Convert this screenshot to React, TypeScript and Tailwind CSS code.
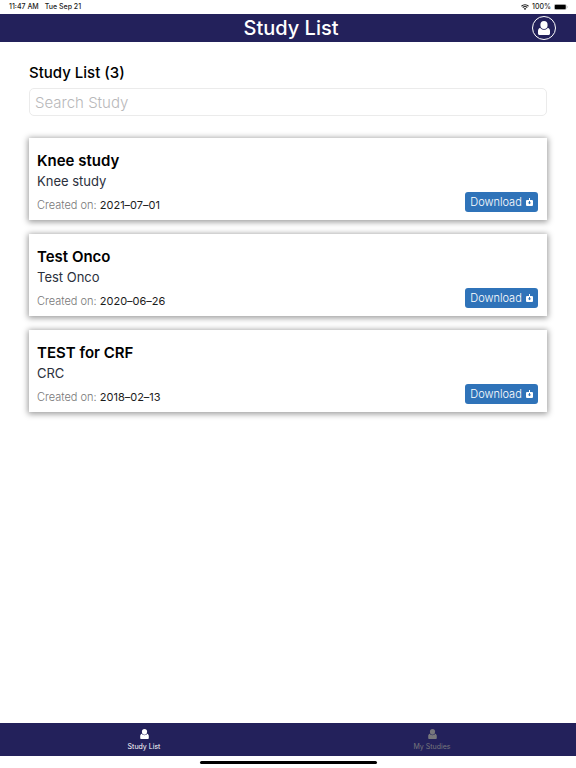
import { useState } from "react";

type Study = {
  id: number;
  name: string;
  description: string;
  createdOn: string;
};

const studies: Study[] = [
  {
    id: 1,
    name: "Knee study",
    description: "Knee study",
    createdOn: "2021–07–01",
  },
  {
    id: 2,
    name: "Test Onco",
    description: "Test Onco",
    createdOn: "2020–06–26",
  },
  {
    id: 3,
    name: "TEST for CRF",
    description: "CRC",
    createdOn: "2018–02–13",
  },
];

function PersonIcon({ className }: { className: string }) {
  return (
    <svg viewBox="0 0 24 28" fill="currentColor" aria-hidden className={className}>
      <ellipse cx="12" cy="8" rx="7.2" ry="8" />
      <path d="M4.500 13.500C1.500 14.500 0 17 0 20v5c0 1.700 1.300 3 3 3h18c1.700 0 3-1.300 3-3v-5c0-3-1.500-5.500-4.500-6.500-1.700 2.700-4.300 4-7.500 4s-5.800-1.300-7.500-4z" />
    </svg>
  );
}

function DownloadIcon() {
  return (
    <svg viewBox="0 0 14 16" aria-hidden className="h-2 w-[7px]">
      <path d="M6 0h2v4h4a2 2 0 0 1 2 2v8a2 2 0 0 1-2 2H2a2 2 0 0 1-2-2V6a2 2 0 0 1 2-2h4z" fill="white" />
      <path d="M6 6h2v3h2.500L7 12.500 3.500 9H6z" fill="#2f73b9" />
    </svg>
  );
}

function StatusBar() {
  return (
    <div className="flex h-3.5 items-center justify-between pr-2 pl-[9px] text-[7px] font-medium text-[#1c1c1c]">
      <div className="flex gap-1.5">
        <span>11:47 AM</span>
        <span>Tue Sep 21</span>
      </div>
      <div className="flex items-center gap-[3px]">
        <svg viewBox="0 0 16 12" aria-hidden className="h-1.5 w-2">
          <path d="M1 4.500a10 10 0 0 1 14 0M3.500 7.300a6.400 6.400 0 0 1 9 0" fill="none" stroke="currentColor" strokeWidth="2.200" />
          <path d="M5.500 9.300a3.600 3.600 0 0 1 5 0L8 12z" fill="currentColor" />
        </svg>
        <span>100%</span>
        <svg viewBox="0 0 28 12" aria-hidden className="h-1.5 w-3.5">
          <rect x="0.500" y="0.500" width="24" height="11" rx="3" fill="none" stroke="#999" />
          <rect x="1.500" y="1.500" width="22" height="9" rx="2" fill="black" />
          <path d="M26 4c1.500.5 1.500 3.500 0 4z" fill="#999" />
        </svg>
      </div>
    </div>
  );
}

function StudyCard({ study }: { study: Study }) {
  return (
    <li className="flex items-end justify-between bg-white px-2 pt-[13px] pb-[7px] shadow-[0_1px_6px_1px_rgba(0,0,0,0.4)]">
      <div>
        <h3 className="text-[15px] leading-5 font-semibold text-black">
          {study.name}
        </h3>
        <p className="text-[13px] leading-5 text-[#2b303c]">
          {study.description}
        </p>
        <p className="mt-1.5 text-[11px] leading-4 text-[#1c1c1c]">
          <span className="font-light text-[#777]">Created on:</span>{" "}
          {study.createdOn}
        </p>
      </div>

      <button
        type="button"
        className="mr-px mb-px flex h-5 w-[73px] items-center justify-center gap-1 rounded-[3px] bg-[#2f73b9] text-[11px] font-light text-white"
      >
        Download
        <DownloadIcon />
      </button>
    </li>
  );
}

export default function App() {
  const [search, setSearch] = useState("");

  const filtered = studies.filter((study) =>
    study.name.toLowerCase().includes(search.toLowerCase()),
  );

  return (
    <div className="flex min-h-screen flex-col bg-white font-['Inter','Liberation_Sans',sans-serif]">
      <StatusBar />

      <header className="grid h-7 grid-cols-[1fr_auto_1fr] items-center bg-[#23215b] pr-5 pl-[26px] text-white">
        <h1 className="col-start-2 text-[20px] leading-7 font-medium">
          Study List
        </h1>
        <button
          type="button"
          aria-label="Profile"
          className="flex size-6 items-center justify-center justify-self-end rounded-full border border-white"
        >
          <PersonIcon className="h-3.5 w-3" />
        </button>
      </header>

      <main className="flex-1 px-[29px] pt-[21px]">
        <h2 className="text-[15px] leading-5 font-medium text-black">
          <label htmlFor="search">Study List ({filtered.length})</label>
        </h2>
        <input
          id="search"
          type="text"
          placeholder="Search Study"
          value={search}
          onChange={(e) => setSearch(e.target.value)}
          className="mt-[5px] block h-7 w-full rounded-[5px] border border-[#ebebeb] px-[5px] text-[15px] font-light text-black outline-none placeholder:text-[#b8b8ba]"
        />

        <ul className="mt-[22px] flex flex-col gap-3.5">
          {filtered.map((study) => (
            <StudyCard key={study.id} study={study} />
          ))}
        </ul>
      </main>

      <nav className="grid h-[33px] grid-cols-2 bg-[#23215b] text-[7px]">
        <a
          href="#study-list"
          aria-current="page"
          className="flex flex-col items-center justify-center gap-[3px] pt-0.5 text-white"
        >
          <PersonIcon className="h-2.5 w-[9px]" />
          <span>Study List</span>
        </a>
        <a
          href="#my-studies"
          className="flex flex-col items-center justify-center gap-[3px] pt-0.5 text-[#77777c]"
        >
          <PersonIcon className="h-2.5 w-[9px]" />
          <span>My Studies</span>
        </a>
      </nav>

      <div className="flex h-3 items-center justify-center">
        <div className="h-[3px] w-[177px] rounded-full bg-black" />
      </div>
    </div>
  );
}
